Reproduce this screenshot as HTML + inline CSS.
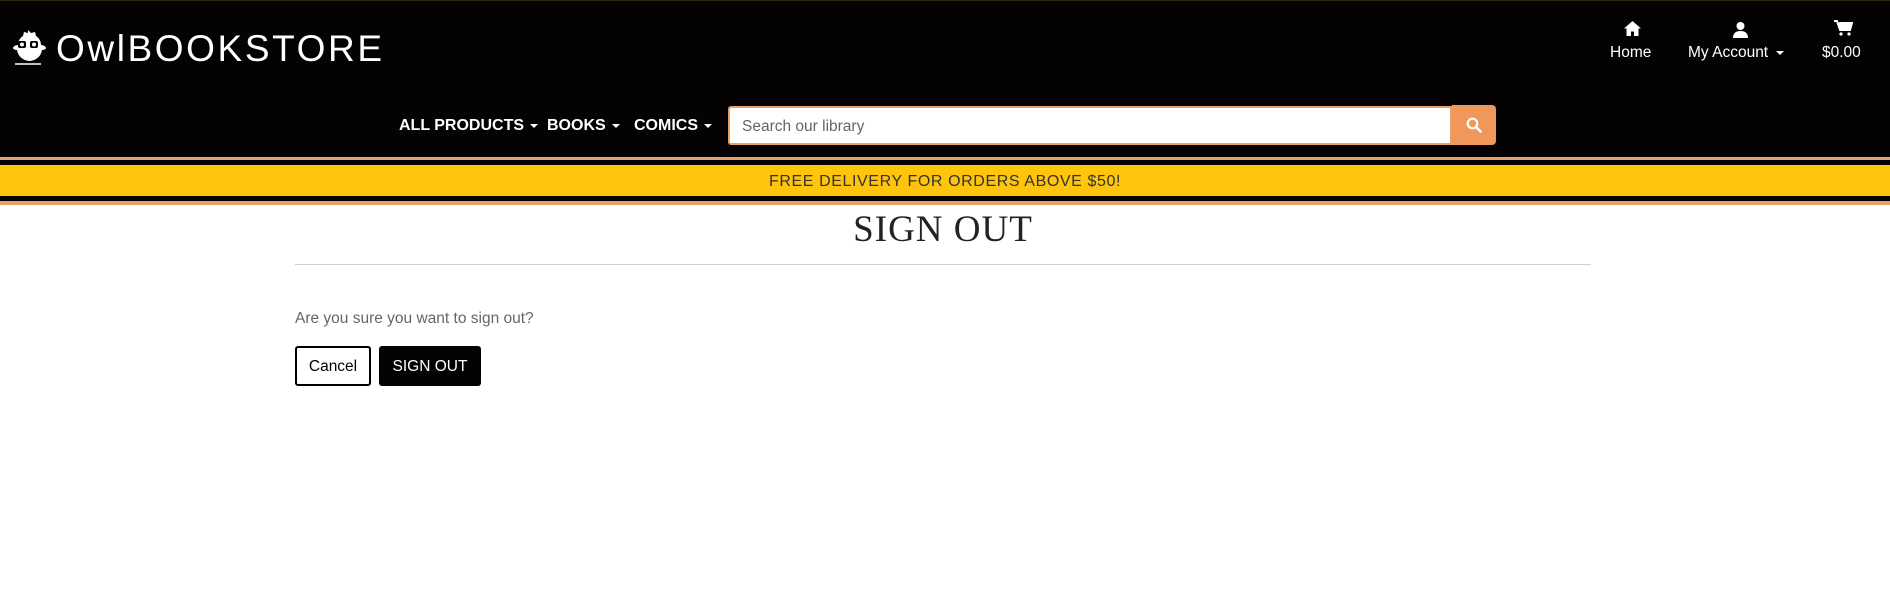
<!DOCTYPE html>
<html><head><meta charset="utf-8"><style>
*{margin:0;padding:0;box-sizing:border-box}
body{width:1890px;height:589px;background:#fff;font-family:"Liberation Sans",sans-serif;position:relative;overflow:hidden}
.hdr{position:absolute;left:0;top:0;width:1890px;height:157px;background:#050203;border-top:1px solid #2a2a10}
.a{position:absolute;color:#fff}
.logo{left:56px;top:28px;font-size:37px;letter-spacing:2.6px;color:#fff;font-weight:normal}
.nav{font-weight:bold;font-size:16px;top:117px}
.car{display:inline-block;width:0;height:0;border-left:4px solid transparent;border-right:4px solid transparent;border-top:4px solid #fff;vertical-align:middle;margin-left:6px}
.top{font-size:15.5px;top:44px}
.search{position:absolute;left:728px;top:106px;width:724px;height:39px;background:#fff;border:2px solid #e9a064;border-radius:3px 0 0 3px;color:#666;font-size:15.5px;padding:10px 12px}
.sbtn{position:absolute;left:1452px;top:105px;width:44px;height:40px;background:#f0975a;border-radius:0 4px 4px 0}
.band{position:absolute;left:0;width:1890px}
</style></head><body>
<div class="hdr"></div>
<svg class="a" style="left:9px;top:29px" width="38" height="38" viewBox="0 0 38 38">
<path d="M19 1l3 3 4-1 1 4c3 2 5 5 5 9 3 0 5 2 5 3s-2 2-4 2c-1 6-5 10-12 11h-1c-7-1-11-5-12-11-2 0-4-1-4-2s2-3 5-3c0-4 2-7 5-9l1-4 4 1z" fill="#fff"/>
<rect x="9" y="12" width="8" height="7" rx="2" fill="#050203"/><rect x="21" y="12" width="8" height="7" rx="2" fill="#050203"/>
<circle cx="13" cy="15.5" r="2" fill="#fff"/><circle cx="25" cy="15.5" r="2" fill="#fff"/>
<path d="M6 35h26" stroke="#fff" stroke-width="1.5"/>
</svg>
<div class="a logo">OwlBOOKSTORE</div>

<svg class="a" style="left:1624px;top:21px" width="17" height="15" viewBox="0 0 17 15"><path d="M8.5 0L0 7.5h2.5V15h4.5v-4.5h3V15h4.5V7.5H17z" fill="#fff"/></svg>
<div class="a top" style="left:1610px">Home</div>
<svg class="a" style="left:1733px;top:22px" width="15" height="16" viewBox="0 0 15 16"><circle cx="7.5" cy="4" r="4" fill="#fff"/><path d="M0 16c0-5 3-7 7.5-7S15 11 15 16z" fill="#fff"/></svg>
<div class="a top" style="left:1688px">My Account<span class="car" style="margin-left:8px"></span></div>
<svg class="a" style="left:1834px;top:20px" width="19" height="16" viewBox="0 0 19 16"><path d="M0 1h3l3 9h10l2-7H5" stroke="#fff" stroke-width="2" fill="#fff"/><circle cx="7" cy="14" r="1.6" fill="#fff"/><circle cx="15" cy="14" r="1.6" fill="#fff"/></svg>
<div class="a top" style="left:1822px">$0.00</div>

<div class="a nav" style="left:399px">ALL PRODUCTS<span class="car"></span></div>
<div class="a nav" style="left:547px">BOOKS<span class="car"></span></div>
<div class="a nav" style="left:634px">COMICS<span class="car"></span></div>
<div class="search">Search our library</div>
<div class="sbtn"><svg style="position:absolute;left:14px;top:12px" width="16" height="16" viewBox="0 0 16 16"><circle cx="6.5" cy="6.5" r="4.8" stroke="#fff" stroke-width="2.2" fill="none"/><path d="M10 10l4.5 4.5" stroke="#fff" stroke-width="2.6" stroke-linecap="round"/></svg></div>

<div class="band" style="top:157px;height:3px;background:#e9a064"></div>
<div class="band" style="top:160px;height:5px;background:#050203"></div>
<div class="band" style="top:165px;height:31px;background:#ffc40c;text-align:center;font-size:16px;letter-spacing:0.6px;color:#333;line-height:33px">FREE DELIVERY FOR ORDERS ABOVE $50!</div>
<div class="band" style="top:196px;height:5px;background:#050203"></div>
<div class="band" style="top:201px;height:4px;background:#e9a064"></div>

<div style="position:absolute;left:295px;width:1296px;top:208px;text-align:center;font-family:'Liberation Serif',serif;font-size:37px;letter-spacing:1px;color:#222">SIGN OUT</div>
<div style="position:absolute;left:295px;width:1296px;top:264px;height:1px;background:#d0d0d0"></div>
<div style="position:absolute;left:295px;top:310px;font-size:15.5px;color:#666">Are you sure you want to sign out?</div>
<div style="position:absolute;left:295px;top:346px;width:76px;height:40px;border:2px solid #000;border-radius:3px;font-size:15.5px;text-align:center;line-height:37px;color:#000">Cancel</div>
<div style="position:absolute;left:379px;top:346px;width:102px;height:40px;background:#050203;border-radius:3px;font-size:15.5px;text-align:center;line-height:41px;color:#fff">SIGN OUT</div>
</body></html>
